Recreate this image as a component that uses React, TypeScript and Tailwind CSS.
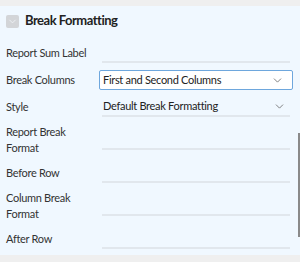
import { ChevronDown } from "lucide-react";

function Field({ value, select, focused }: { value?: string; select?: boolean; focused?: boolean }) {
  if (focused)
    return (
      <div className="h-[20px] flex items-center justify-between pl-[3px] pr-[8px] border border-[#6ea7dd] bg-white rounded-[2px] text-[#222]">
        <span>{value}</span>
        <ChevronDown size={13} strokeWidth={1.5} className="text-[#666]" />
      </div>
    );

  return (
    <div className="mx-[3px] h-[20px] flex items-center justify-between border-b-2 border-[#e1e7ed] text-[#222]">
      <span className="ml-[1px]">{value}</span>
      {select && <ChevronDown size={13} strokeWidth={1.5} className="text-[#666] mr-[4px]" />}
    </div>
  );
}

function Row({ label, children }: { label: string; children: React.ReactNode }) {
  return (
    <div className="flex items-center">
      <div className="w-[93px] pr-[10px] leading-[16px] text-[#333]">{label}</div>
      <div className="flex-1">{children}</div>
    </div>
  );
}

export default function App() {
  return (
    <div
      className="w-[300px] h-[262px] bg-[#efefef] flex flex-col text-[11px] tracking-[-0.3px]"
      style={{ fontFamily: "Lato, 'Noto Sans', sans-serif" }}
    >
      <div className="h-[6px]" />
      <div className="flex h-[249px]">
        <div className="flex-1 bg-[#f0f8ff] pl-[6px] pr-[5px]">
          <div className="h-[30px] flex items-center gap-[6px]">
            <span className="w-[13px] h-[13px] bg-[#d3d5d8] rounded-[2px] flex items-center justify-center">
              <ChevronDown size={11} strokeWidth={2} className="text-[#eef1f4]" />
            </span>
            <span className="text-[13px] font-bold tracking-[-0.5px] text-[#222]">Break Formatting</span>
          </div>
          <div className="mt-[7px] flex flex-col gap-[7px]">
            <Row label="Report Sum Label">
              <Field />
            </Row>
            <Row label="Break Columns">
              <Field value="First and Second Columns" focused />
            </Row>
            <Row label="Style">
              <Field value="Default Break Formatting" select />
            </Row>
            <Row label="Report Break Format">
              <Field />
            </Row>
            <Row label="Before Row">
              <Field />
            </Row>
            <Row label="Column Break Format">
              <Field />
            </Row>
            <Row label="After Row">
              <Field />
            </Row>
          </div>
        </div>
        <div className="w-[2px] bg-[#f0f8ff]">
          <div className="mt-[127px] h-[104px] bg-[#8a8a8a]" />
        </div>
      </div>
    </div>
  );
}
